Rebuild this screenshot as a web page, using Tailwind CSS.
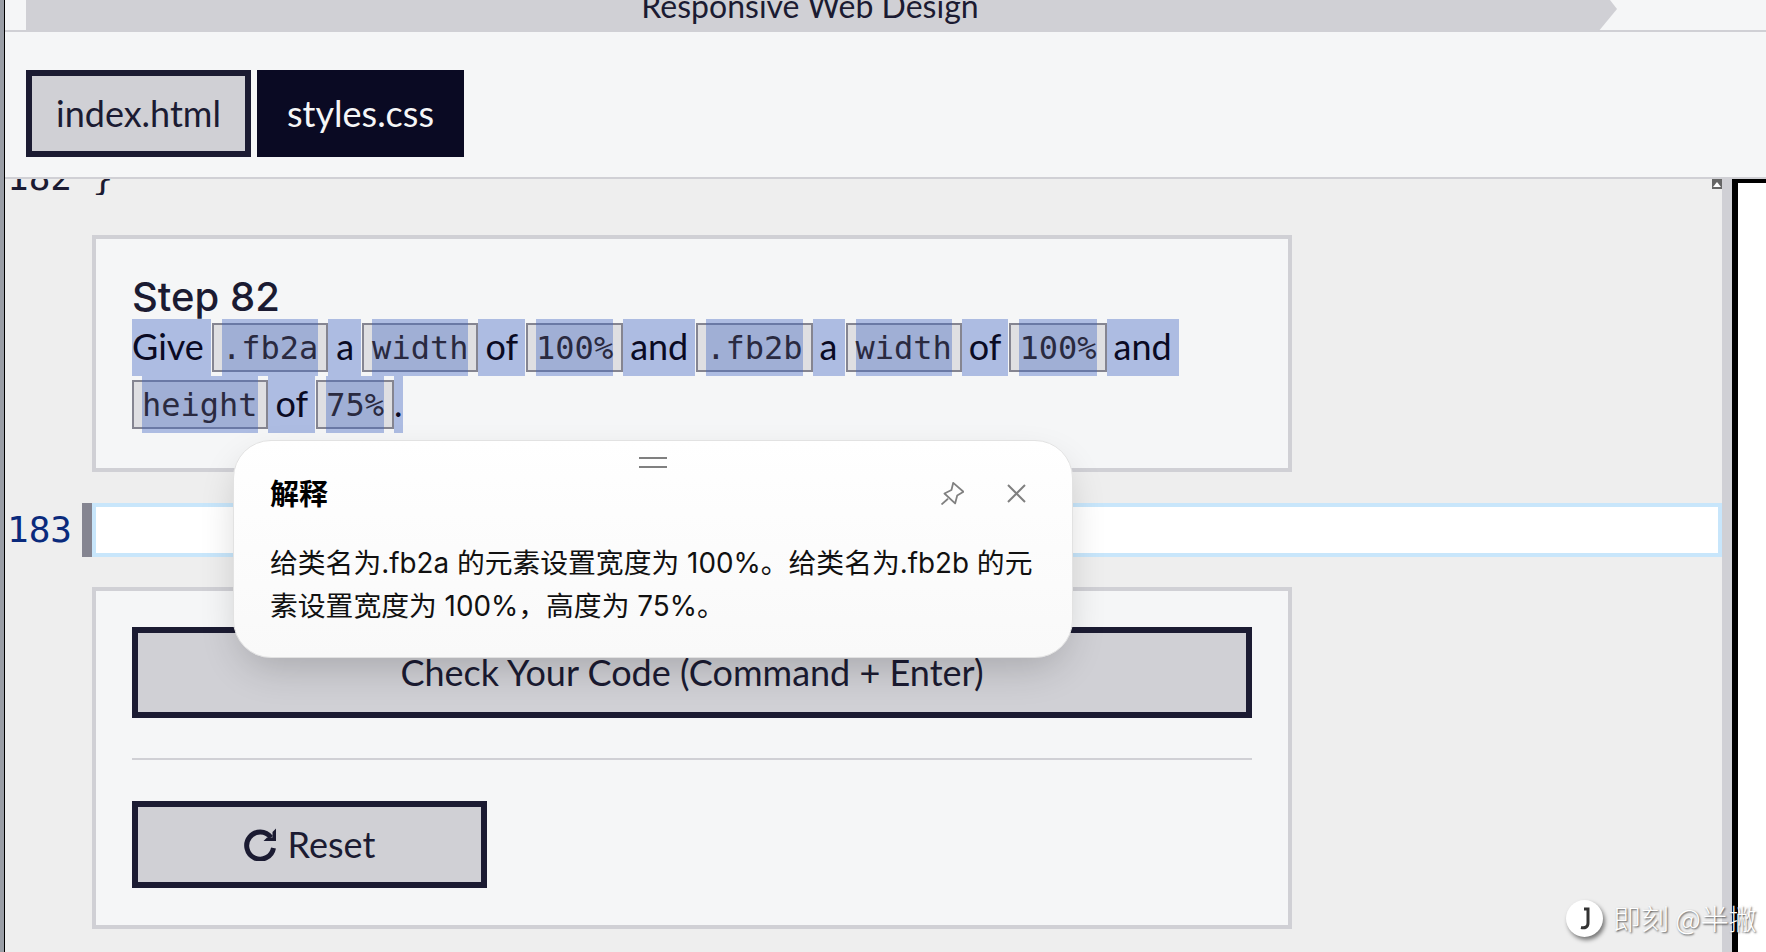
<!DOCTYPE html>
<html lang="en">
<head>
    <meta charset="UTF-8">
    <meta name="viewport" content="width=device-width, initial-scale=1.0">
    <title>Responsive Web Design</title>
    <script src="https://cdn.jsdelivr.net/npm/@tailwindcss/browser@4"></script>
</head>
<body class="bg-[#f5f6f7] overflow-hidden font-['Lato','Noto_Sans_CJK_SC',sans-serif] text-[#0a0a23]">
<div class="relative flex w-[1766px] h-[952px] overflow-hidden">
    <div class="w-[5px] shrink-0 bg-[#9a9ea6] border-r border-black"></div>

    <div class="flex-1 flex flex-col min-w-0">
        <!-- breadcrumb and file tabs -->
        <div class="h-[179px] shrink-0 border-b-2 border-[#d0d0d5]">
            <div class="flex h-[32px] border-b-2 border-[#d0d0d5] pl-[21px]">
                <div class="w-[1591px] h-[32px] shrink-0 bg-[#d0d0d5] overflow-hidden flex justify-center pr-[23px] [clip-path:polygon(0_0,1584px_0,1591px_9px,1572px_100%,0_100%)]">
                    <span class="text-[32px] leading-[32px] -mt-[10px] text-[#1b1b32]">Responsive Web Design</span>
                </div>
            </div>
            <div class="flex gap-[6px] pl-[21px] pt-[38px]">
                <button class="w-[225px] h-[87px] pb-[2px] bg-[#d0d0d5] border-[6px] border-[#1b1b32] text-[36px] text-[#1b1b32]">index.html</button>
                <button class="w-[207px] h-[87px] pb-[2px] bg-[#0a0a23] text-[36px] text-[#f5f6f7]">styles.css</button>
            </div>
        </div>

        <div class="flex-1 flex min-h-0">
            <!-- editor -->
            <div class="relative w-[1717px] shrink-0 bg-[#eeeeee] overflow-hidden">
                <div class="h-[16px] overflow-hidden font-['DejaVu_Sans_Mono',monospace] text-[36px] leading-[52px] text-[#1b1b32]">
                    <div class="flex -mt-[27px] pl-[2px]"><span class="w-[85px]">182</span><span>}</span></div>
                </div>

                <div class="ml-[87px] mt-[40px] w-[1200px] h-[237px] border-[4px] border-[#d0d0d5] bg-[#f5f6f7] px-[36px] pt-[36px]">
                    <h2 class="font-['Inter',sans-serif] font-medium text-[40px] leading-[44px] text-[#1b1b32]">Step 82</h2>
                    <div class="text-[36px] text-[#0a0a23]">
                        <div class="flex h-[57px] items-center">
                            <span class="h-[57px] leading-[55px] bg-[#4166c4]/40 pr-[7px]">Give</span>
                            <code class="ml-[1px] h-[49px] border-2 border-[#858591] bg-[#dfdfe2] px-[8px] flex items-center font-['DejaVu_Sans_Mono',monospace] text-[32px] text-[#2a2a40]"><span class="h-[57px] leading-[59px] bg-[#4166c4]/40">.fb2a</span></code>
                            <span class="h-[57px] leading-[55px] bg-[#4166c4]/40 pl-[8px] pr-[7px]">a</span>
                            <code class="ml-[1px] h-[49px] border-2 border-[#858591] bg-[#dfdfe2] px-[8px] flex items-center font-['DejaVu_Sans_Mono',monospace] text-[32px] text-[#2a2a40]"><span class="h-[57px] leading-[59px] bg-[#4166c4]/40">width</span></code>
                            <span class="h-[57px] leading-[55px] bg-[#4166c4]/40 px-[7px]">of</span>
                            <code class="ml-[1px] h-[49px] border-2 border-[#858591] bg-[#dfdfe2] px-[8px] flex items-center font-['DejaVu_Sans_Mono',monospace] text-[32px] text-[#2a2a40]"><span class="h-[57px] leading-[59px] bg-[#4166c4]/40">100%</span></code>
                            <span class="h-[57px] leading-[55px] bg-[#4166c4]/40 px-[7px]">and</span>
                            <code class="ml-[1px] h-[49px] border-2 border-[#858591] bg-[#dfdfe2] px-[8px] flex items-center font-['DejaVu_Sans_Mono',monospace] text-[32px] text-[#2a2a40]"><span class="h-[57px] leading-[59px] bg-[#4166c4]/40">.fb2b</span></code>
                            <span class="h-[57px] leading-[55px] bg-[#4166c4]/40 px-[7px]">a</span>
                            <code class="ml-[1px] h-[49px] border-2 border-[#858591] bg-[#dfdfe2] px-[8px] flex items-center font-['DejaVu_Sans_Mono',monospace] text-[32px] text-[#2a2a40]"><span class="h-[57px] leading-[59px] bg-[#4166c4]/40">width</span></code>
                            <span class="h-[57px] leading-[55px] bg-[#4166c4]/40 px-[7px]">of</span>
                            <code class="ml-[1px] h-[49px] border-2 border-[#858591] bg-[#dfdfe2] px-[8px] flex items-center font-['DejaVu_Sans_Mono',monospace] text-[32px] text-[#2a2a40]"><span class="h-[57px] leading-[59px] bg-[#4166c4]/40">100%</span></code>
                            <span class="h-[57px] leading-[55px] bg-[#4166c4]/40 px-[7px]">and</span>
                        </div>
                        <div class="flex h-[57px] items-center">
                            <code class="h-[49px] border-2 border-[#858591] bg-[#dfdfe2] px-[8px] flex items-center font-['DejaVu_Sans_Mono',monospace] text-[32px] text-[#2a2a40]"><span class="h-[57px] leading-[59px] bg-[#4166c4]/40">height</span></code>
                            <span class="h-[57px] leading-[55px] bg-[#4166c4]/40 pl-[8px] pr-[7px]">of</span>
                            <code class="ml-[1px] h-[49px] border-2 border-[#858591] bg-[#dfdfe2] px-[8px] flex items-center font-['DejaVu_Sans_Mono',monospace] text-[32px] text-[#2a2a40]"><span class="h-[57px] leading-[59px] bg-[#4166c4]/40">75%</span></code>
                            <span class="h-[57px] leading-[55px] bg-[#4166c4]/40">.</span>
                        </div>
                    </div>
                </div>

                <!-- line 183 -->
                <div class="flex items-stretch mt-[31px] h-[54px]">
                    <span class="w-[77px] pl-[2px] font-['DejaVu_Sans_Mono',monospace] text-[36px] leading-[53px] text-[#0a2a7c]">183</span>
                    <span class="w-[10px] bg-[#858591]"></span>
                    <div class="w-[1630px] shrink-0 border-[4px] border-[#c8e6fb] bg-white"></div>
                </div>

                <!-- action card -->
                <div class="ml-[87px] mt-[30px] w-[1200px] h-[342px] border-[4px] border-[#d0d0d5] bg-[#f5f6f7] px-[36px] pt-[36px]">
                    <button class="block w-full h-[91px] pb-[2px] bg-[#d0d0d5] border-[6px] border-[#1b1b32] text-[36px] text-[#1b1b32]">Check Your Code (Command + Enter)</button>
                    <div class="mt-[40px] h-[2px] bg-[#d0d0d5]"></div>
                    <button class="mt-[41px] flex items-center justify-center gap-[11px] w-[355px] h-[87px] bg-[#d0d0d5] border-[6px] border-[#1b1b32] text-[36px] text-[#1b1b32]">
                        <svg class="w-[33px] h-[33px]" viewBox="0 0 33 33" fill="none">
                            <path d="M27 9.5A13.5 13.5 0 1 0 29.5 20" stroke="#1b1b32" stroke-width="5"/>
                            <path d="M32 0.5V13H19.5L23 9.5H28.5V4Z" fill="#1b1b32"/>
                        </svg>
                        <span class="pb-[2px]">Reset</span>
                    </button>
                </div>

                <!-- overview ruler arrow -->
                <div class="absolute top-0 right-0 w-[10px] h-[10px] bg-[#666666] flex items-center justify-center">
                    <span class="w-0 h-0 border-x-[4px] border-x-transparent border-b-[5px] border-b-white"></span>
                </div>
            </div>
            <div class="w-[10px] shrink-0 bg-[#d0d0d5]"></div>
            <div class="flex-1 bg-white border-l-[6px] border-t-[4px] border-black"></div>
        </div>
    </div>

    <!-- explanation popup -->
    <div class="absolute left-[233px] top-[440px] w-[840px] h-[218px] rounded-[38px] border border-[#e2e2e2] bg-gradient-to-b from-white to-[#f9f9f9] shadow-[0_16px_40px_-8px_rgba(0,0,0,0.2)] font-['Inter','Noto_Sans_CJK_SC',sans-serif]">
        <div class="flex flex-col gap-[7px] w-[28px] mx-auto mt-[16px]">
            <span class="h-[2px] bg-[#808080]"></span>
            <span class="h-[2px] bg-[#808080]"></span>
        </div>
        <div class="flex items-center justify-between pl-[36px] pr-[46px] mt-[7px] h-[36px]">
            <h3 class="mt-[4px] text-[29px] font-bold text-black">解释</h3>
            <div class="flex items-center gap-[43px]">
                <svg class="w-[23px] h-[23px]" viewBox="0 0 22 22" fill="none" stroke="#808080" stroke-width="1.7" stroke-linejoin="round">
                    <path d="M0.5 21.5L6.7 16"/>
                    <path d="M11.7 0.8L21.5 9.3L15.5 13L13.5 20.5L3.3 11L10 7.7Z"/>
                </svg>
                <svg class="w-[19px] h-[19px]" viewBox="0 0 19 19" stroke="#808080" stroke-width="2"><path d="M1 1L18 18M18 1L1 18"/></svg>
            </div>
        </div>
        <p class="ml-[36px] mt-[31px] w-[770px] text-[27.8px] leading-[43px] text-[#111111]">给类名为.fb2a 的元素设置宽度为 100%。给类名为.fb2b 的元素设置宽度为 100%，高度为 75%。</p>
    </div>

    <!-- watermark -->
    <div class="absolute left-[1566px] top-[900px] flex items-center gap-[10px]">
        <div class="w-[37px] h-[37px] rounded-full bg-white shadow-[2px_3px_4px_rgba(0,0,0,0.5)] flex items-center justify-center">
            <svg class="w-[14px] h-[24px]" viewBox="0 0 14 24" fill="none" stroke="#333333" stroke-width="3"><path d="M6 2H10V16C10 20 7 21.5 3 20.5"/></svg>
        </div>
        <span class="font-['Noto_Sans_CJK_SC',sans-serif] text-[28px] leading-[37px] font-light text-white [text-shadow:1px_1px_2px_rgba(0,0,0,0.7)]">即刻 @半撇</span>
    </div>
</div>
</body>
</html>
